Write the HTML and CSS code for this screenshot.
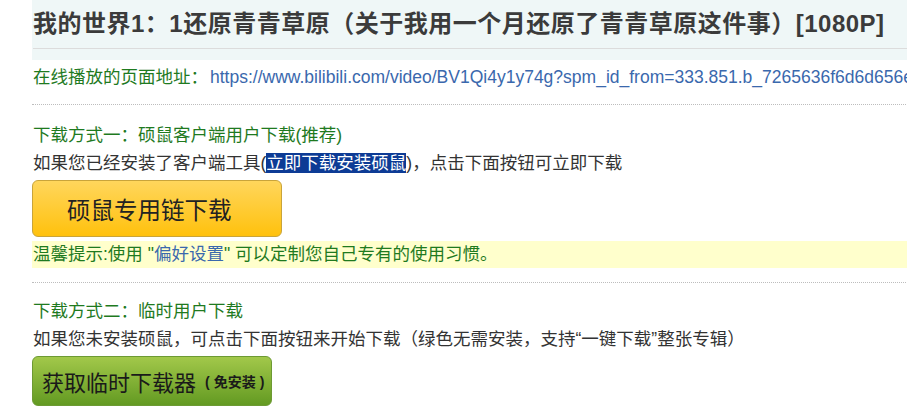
FILE: index.html
```html
<!DOCTYPE html>
<html lang="zh-CN">
<head>
<meta charset="utf-8">
<title>下载</title>
<link rel="stylesheet" href="styles.css">
</head>
<body>
<div class="page">
  <div class="head">
    <h1 class="title">我的世界1：1还原青青草原（关于我用一个月还原了青青草原这件事）[1080P]</h1>
  </div>
  <div class="url-row">
    <span class="green">在线播放的页面地址：</span><span class="url">https://www.bilibili.com/video/BV1Qi4y1y74g?spm_id_from=333.851.b_7265636f6d6d656e64.1</span>
  </div>
  <div class="sec sec-first">
    <div class="sec-title">下载方式一：硕鼠客户端用户下载(推荐)</div>
    <div class="desc">如果您已经安装了客户端工具(<span class="sel">立即下载安装硕鼠</span>)，点击下面按钮可立即下载</div>
    <div class="btn btn-yellow">硕鼠专用链下载</div>
    <div class="tip">温馨提示:使用 "<span class="blue">偏好设置</span>" 可以定制您自己专有的使用习惯。</div>
  </div>
  <div class="sec sec-second">
    <div class="sec-title">下载方式二：临时用户下载</div>
    <div class="desc">如果您未安装硕鼠，可点击下面按钮来开始下载（绿色无需安装，支持“一键下载”整张专辑）</div>
    <div class="btn btn-green">获取临时下载器<span class="small"><span class="paren">(</span>免安装<span class="paren">)</span></span></div>
  </div>
</div>
</body>
</html>
```

FILE: styles.css
```css
html, body {
  margin: 0;
  padding: 0;
  overflow: hidden;
  background: #ffffff;
}
body {
  font-family: "Liberation Sans", "Noto Sans CJK SC", sans-serif;
  color: #333333;
  font-size: 17.5px;
}
.page {
  margin-left: 32px;
  width: 1400px;
}
.head {
  background: #eff7f7;
  padding: 0 0 11px 1px;
}
.title {
  margin: 0;
  font-size: 24px;
  font-weight: bold;
  line-height: 48px;
  color: #3b3b3b;
  white-space: nowrap;
  border-bottom: 1px solid #dcdcdc;
  letter-spacing: 0.5px;
}
.url-row {
  line-height: 34px;
  padding: 0 0 10px 1px;
  border-bottom: 1px dotted #bdbdbd;
  white-space: nowrap;
}
.green {
  color: #1f7a1f;
}
.url {
  color: #3a68ad;
  font-size: 17.5px;
  margin-left: 2px;
}
.sec {
  padding-left: 1px;
}
.sec-first {
  padding-top: 17px;
  padding-bottom: 14px;
  border-bottom: 1px dotted #bdbdbd;
}
.sec-second {
  padding-top: 15px;
}
.sec-title {
  line-height: 26px;
  color: #1f7a1f;
  white-space: nowrap;
}
.desc {
  margin-top: 2px;
  line-height: 26px;
  color: #333333;
  white-space: nowrap;
}
.sel {
  background: #0d3b95;
  color: #ffffff;
}
.blue {
  color: #3a68ad;
}
.btn {
  margin-top: 4px;
  box-sizing: border-box;
  border-radius: 6px;
  display: flex;
  align-items: center;
  white-space: nowrap;
}
.btn-yellow {
  width: 250px;
  height: 57px;
  margin-left: -1px;
  padding-left: 34px;
  font-size: 23.5px;
  color: #222222;
  border: 1px solid #c9a43a;
  background: linear-gradient(#ffd65c, #ffc10d);
}
.tip {
  margin-top: 4px;
  margin-left: -1px;
  padding-left: 1px;
  line-height: 27px;
  background: #ffffcc;
  color: #1f7a1f;
  white-space: nowrap;
}
.btn-green {
  width: 240px;
  height: 50px;
  margin-left: -1px;
  padding-left: 9px;
  font-size: 22px;
  color: #1a1a1a;
  border: 1px solid #6d9a33;
  background: linear-gradient(#a2c84a, #639a22);
}
.small {
  font-size: 14px;
  font-weight: bold;
  margin-left: 5px;
}
.paren {
  margin: 0 4px;
}
```
